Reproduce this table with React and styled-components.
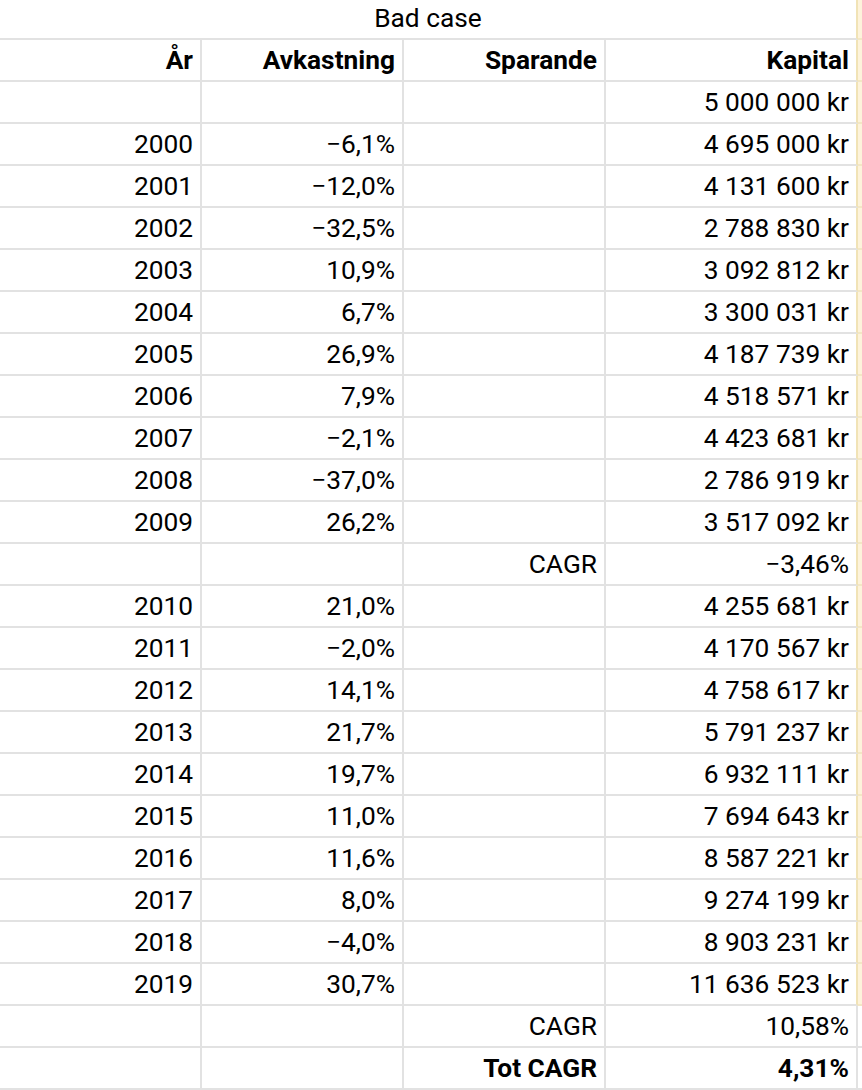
import React from "react";
import styled, { createGlobalStyle } from "styled-components";

const Global = createGlobalStyle`
  html, body { margin: 0; padding: 0; background: #fff; }
  body { font-family: Roboto, "Liberation Sans", Arial, sans-serif; color: #000; }
`;

const Sheet = styled.div`
  display: grid;
  grid-template-columns: 202px 202px 202px 252px 1fr;
  grid-template-rows: 40px;
  grid-auto-rows: 42px;
  width: 862px;
  overflow: hidden;
  font-size: 26.3px;
`;

const Cell = styled.div`
  display: flex;
  align-items: center;
  justify-content: ${(p) => (p.$center ? "center" : "flex-end")};
  padding: 0 7px 0 0;
  border-right: 2px solid ${(p) => (p.$yellowEdge ? "#f1e3b6" : "#e2e2e2")};
  border-bottom: 2px solid #e2e2e2;
  font-weight: ${(p) => (p.$bold ? 700 : 400)};
  white-space: nowrap;
  line-height: 1;
  box-sizing: border-box;
  grid-column: ${(p) => p.$span || "auto"};
`;

const Title = styled(Cell)`
  padding: 0 0 2px 0;
`;

const Edge = styled.div`
  border-bottom: 2px solid ${(p) => (p.$yellow ? "#f3e7c4" : "#e2e2e2")};
  background: ${(p) => (p.$yellow ? "#fdf3db" : "#fff")};
  box-sizing: border-box;
`;

const rows = [
  ["", "", "", "5 000 000 kr"],
  ["2000", "−6,1%", "", "4 695 000 kr"],
  ["2001", "−12,0%", "", "4 131 600 kr"],
  ["2002", "−32,5%", "", "2 788 830 kr"],
  ["2003", "10,9%", "", "3 092 812 kr"],
  ["2004", "6,7%", "", "3 300 031 kr"],
  ["2005", "26,9%", "", "4 187 739 kr"],
  ["2006", "7,9%", "", "4 518 571 kr"],
  ["2007", "−2,1%", "", "4 423 681 kr"],
  ["2008", "−37,0%", "", "2 786 919 kr"],
  ["2009", "26,2%", "", "3 517 092 kr"],
  ["", "", "CAGR", "−3,46%"],
  ["2010", "21,0%", "", "4 255 681 kr"],
  ["2011", "−2,0%", "", "4 170 567 kr"],
  ["2012", "14,1%", "", "4 758 617 kr"],
  ["2013", "21,7%", "", "5 791 237 kr"],
  ["2014", "19,7%", "", "6 932 111 kr"],
  ["2015", "11,0%", "", "7 694 643 kr"],
  ["2016", "11,6%", "", "8 587 221 kr"],
  ["2017", "8,0%", "", "9 274 199 kr"],
  ["2018", "−4,0%", "", "8 903 231 kr"],
  ["2019", "30,7%", "", "11 636 523 kr"],
  ["", "", "CAGR", "10,58%", "white"],
  ["", "", "Tot CAGR", "4,31%", "white", "bold"],
];

const nb = (s) => s.replace(/ /g, "\u00a0");

export default function App() {
  return (
    <>
      <Global />
      <Sheet>
        <Title $span="1 / 5" $center $yellowEdge>Bad case</Title>
        <Edge $yellow />

        <Cell $bold>År</Cell>
        <Cell $bold>Avkastning</Cell>
        <Cell $bold>Sparande</Cell>
        <Cell $bold $yellowEdge>Kapital</Cell>
        <Edge $yellow />

        {rows.map((r, i) => {
          const yellow = r[4] !== "white";
          const bold = r[5] === "bold";
          return (
            <React.Fragment key={i}>
              <Cell>{r[0]}</Cell>
              <Cell>{r[1]}</Cell>
              <Cell $bold={bold}>{r[2]}</Cell>
              <Cell $bold={bold} $yellowEdge={yellow}>{nb(r[3])}</Cell>
              <Edge $yellow={yellow} />
            </React.Fragment>
          );
        })}
      </Sheet>
    </>
  );
}
